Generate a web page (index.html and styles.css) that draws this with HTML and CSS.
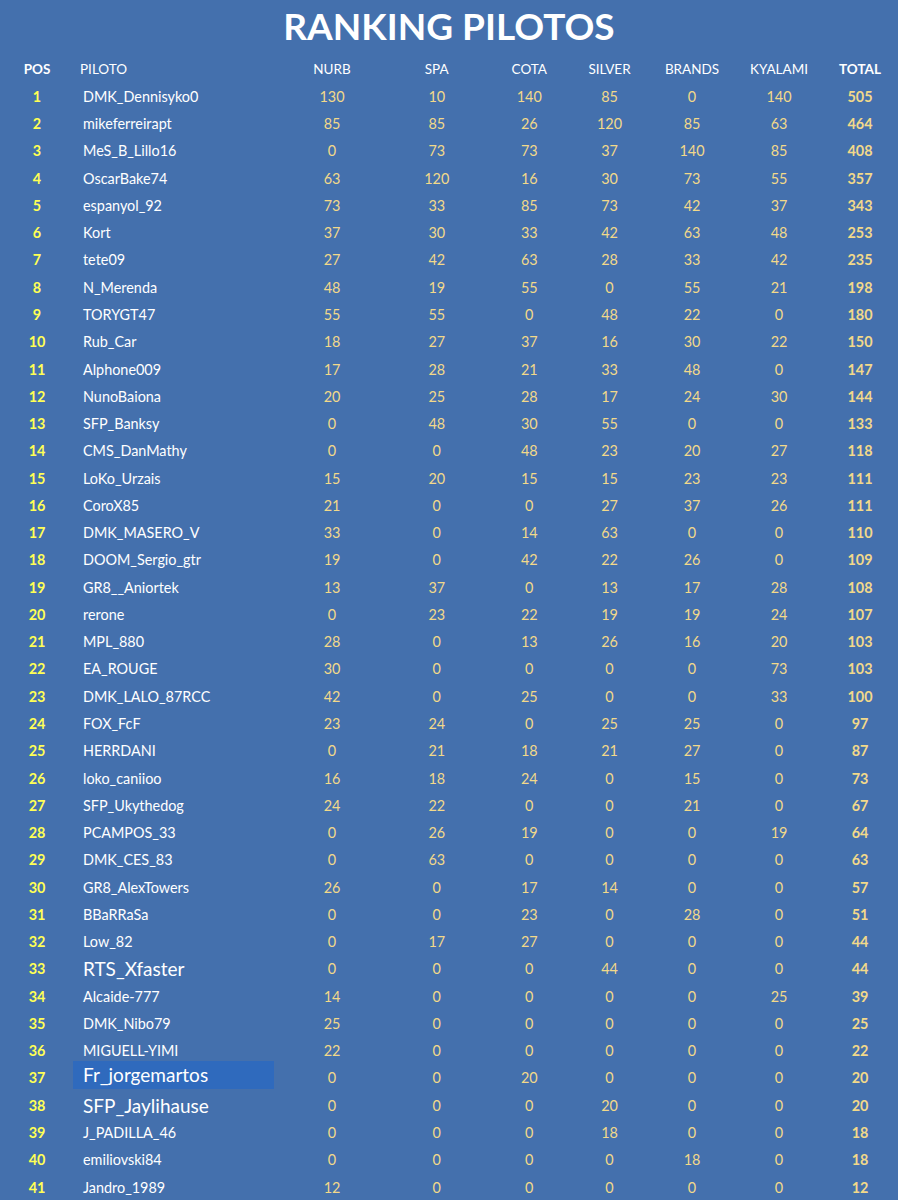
FILE: index.html
```html
<!DOCTYPE html>
<html lang="es">
<head>
<meta charset="utf-8">
<title>Ranking Pilotos</title>
<link rel="stylesheet" href="styles.css">
</head>
<body>
<div class="page">
  <h1 class="title">RANKING PILOTOS</h1>
  <div class="row head">
    <div class="pos">POS</div><div class="name">PILOTO</div><div class="v">NURB</div><div class="v">SPA</div><div class="v">COTA</div><div class="v">SILVER</div><div class="v">BRANDS</div><div class="v">KYALAMI</div><div class="tot">TOTAL</div>
  </div>
  <div class="row"><div class="pos">1</div><div class="name">DMK_Dennisyko0</div><div class="v">130</div><div class="v">10</div><div class="v">140</div><div class="v">85</div><div class="v">0</div><div class="v">140</div><div class="tot">505</div></div>
  <div class="row"><div class="pos">2</div><div class="name">mikeferreirapt</div><div class="v">85</div><div class="v">85</div><div class="v">26</div><div class="v">120</div><div class="v">85</div><div class="v">63</div><div class="tot">464</div></div>
  <div class="row"><div class="pos">3</div><div class="name">MeS_B_Lillo16</div><div class="v">0</div><div class="v">73</div><div class="v">73</div><div class="v">37</div><div class="v">140</div><div class="v">85</div><div class="tot">408</div></div>
  <div class="row"><div class="pos">4</div><div class="name">OscarBake74</div><div class="v">63</div><div class="v">120</div><div class="v">16</div><div class="v">30</div><div class="v">73</div><div class="v">55</div><div class="tot">357</div></div>
  <div class="row"><div class="pos">5</div><div class="name">espanyol_92</div><div class="v">73</div><div class="v">33</div><div class="v">85</div><div class="v">73</div><div class="v">42</div><div class="v">37</div><div class="tot">343</div></div>
  <div class="row"><div class="pos">6</div><div class="name">Kort</div><div class="v">37</div><div class="v">30</div><div class="v">33</div><div class="v">42</div><div class="v">63</div><div class="v">48</div><div class="tot">253</div></div>
  <div class="row"><div class="pos">7</div><div class="name">tete09</div><div class="v">27</div><div class="v">42</div><div class="v">63</div><div class="v">28</div><div class="v">33</div><div class="v">42</div><div class="tot">235</div></div>
  <div class="row"><div class="pos">8</div><div class="name">N_Merenda</div><div class="v">48</div><div class="v">19</div><div class="v">55</div><div class="v">0</div><div class="v">55</div><div class="v">21</div><div class="tot">198</div></div>
  <div class="row"><div class="pos">9</div><div class="name">TORYGT47</div><div class="v">55</div><div class="v">55</div><div class="v">0</div><div class="v">48</div><div class="v">22</div><div class="v">0</div><div class="tot">180</div></div>
  <div class="row"><div class="pos">10</div><div class="name">Rub_Car</div><div class="v">18</div><div class="v">27</div><div class="v">37</div><div class="v">16</div><div class="v">30</div><div class="v">22</div><div class="tot">150</div></div>
  <div class="row"><div class="pos">11</div><div class="name">Alphone009</div><div class="v">17</div><div class="v">28</div><div class="v">21</div><div class="v">33</div><div class="v">48</div><div class="v">0</div><div class="tot">147</div></div>
  <div class="row"><div class="pos">12</div><div class="name">NunoBaiona</div><div class="v">20</div><div class="v">25</div><div class="v">28</div><div class="v">17</div><div class="v">24</div><div class="v">30</div><div class="tot">144</div></div>
  <div class="row"><div class="pos">13</div><div class="name">SFP_Banksy</div><div class="v">0</div><div class="v">48</div><div class="v">30</div><div class="v">55</div><div class="v">0</div><div class="v">0</div><div class="tot">133</div></div>
  <div class="row"><div class="pos">14</div><div class="name">CMS_DanMathy</div><div class="v">0</div><div class="v">0</div><div class="v">48</div><div class="v">23</div><div class="v">20</div><div class="v">27</div><div class="tot">118</div></div>
  <div class="row"><div class="pos">15</div><div class="name">LoKo_Urzais</div><div class="v">15</div><div class="v">20</div><div class="v">15</div><div class="v">15</div><div class="v">23</div><div class="v">23</div><div class="tot">111</div></div>
  <div class="row"><div class="pos">16</div><div class="name">CoroX85</div><div class="v">21</div><div class="v">0</div><div class="v">0</div><div class="v">27</div><div class="v">37</div><div class="v">26</div><div class="tot">111</div></div>
  <div class="row"><div class="pos">17</div><div class="name">DMK_MASERO_V</div><div class="v">33</div><div class="v">0</div><div class="v">14</div><div class="v">63</div><div class="v">0</div><div class="v">0</div><div class="tot">110</div></div>
  <div class="row"><div class="pos">18</div><div class="name">DOOM_Sergio_gtr</div><div class="v">19</div><div class="v">0</div><div class="v">42</div><div class="v">22</div><div class="v">26</div><div class="v">0</div><div class="tot">109</div></div>
  <div class="row"><div class="pos">19</div><div class="name">GR8__Aniortek</div><div class="v">13</div><div class="v">37</div><div class="v">0</div><div class="v">13</div><div class="v">17</div><div class="v">28</div><div class="tot">108</div></div>
  <div class="row"><div class="pos">20</div><div class="name">rerone</div><div class="v">0</div><div class="v">23</div><div class="v">22</div><div class="v">19</div><div class="v">19</div><div class="v">24</div><div class="tot">107</div></div>
  <div class="row"><div class="pos">21</div><div class="name">MPL_880</div><div class="v">28</div><div class="v">0</div><div class="v">13</div><div class="v">26</div><div class="v">16</div><div class="v">20</div><div class="tot">103</div></div>
  <div class="row"><div class="pos">22</div><div class="name">EA_ROUGE</div><div class="v">30</div><div class="v">0</div><div class="v">0</div><div class="v">0</div><div class="v">0</div><div class="v">73</div><div class="tot">103</div></div>
  <div class="row"><div class="pos">23</div><div class="name">DMK_LALO_87RCC</div><div class="v">42</div><div class="v">0</div><div class="v">25</div><div class="v">0</div><div class="v">0</div><div class="v">33</div><div class="tot">100</div></div>
  <div class="row"><div class="pos">24</div><div class="name">FOX_FcF</div><div class="v">23</div><div class="v">24</div><div class="v">0</div><div class="v">25</div><div class="v">25</div><div class="v">0</div><div class="tot">97</div></div>
  <div class="row"><div class="pos">25</div><div class="name">HERRDANI</div><div class="v">0</div><div class="v">21</div><div class="v">18</div><div class="v">21</div><div class="v">27</div><div class="v">0</div><div class="tot">87</div></div>
  <div class="row"><div class="pos">26</div><div class="name">loko_caniioo</div><div class="v">16</div><div class="v">18</div><div class="v">24</div><div class="v">0</div><div class="v">15</div><div class="v">0</div><div class="tot">73</div></div>
  <div class="row"><div class="pos">27</div><div class="name">SFP_Ukythedog</div><div class="v">24</div><div class="v">22</div><div class="v">0</div><div class="v">0</div><div class="v">21</div><div class="v">0</div><div class="tot">67</div></div>
  <div class="row"><div class="pos">28</div><div class="name">PCAMPOS_33</div><div class="v">0</div><div class="v">26</div><div class="v">19</div><div class="v">0</div><div class="v">0</div><div class="v">19</div><div class="tot">64</div></div>
  <div class="row"><div class="pos">29</div><div class="name">DMK_CES_83</div><div class="v">0</div><div class="v">63</div><div class="v">0</div><div class="v">0</div><div class="v">0</div><div class="v">0</div><div class="tot">63</div></div>
  <div class="row"><div class="pos">30</div><div class="name">GR8_AlexTowers</div><div class="v">26</div><div class="v">0</div><div class="v">17</div><div class="v">14</div><div class="v">0</div><div class="v">0</div><div class="tot">57</div></div>
  <div class="row"><div class="pos">31</div><div class="name">BBaRRaSa</div><div class="v">0</div><div class="v">0</div><div class="v">23</div><div class="v">0</div><div class="v">28</div><div class="v">0</div><div class="tot">51</div></div>
  <div class="row"><div class="pos">32</div><div class="name">Low_82</div><div class="v">0</div><div class="v">17</div><div class="v">27</div><div class="v">0</div><div class="v">0</div><div class="v">0</div><div class="tot">44</div></div>
  <div class="row"><div class="pos">33</div><div class="name big">RTS_Xfaster</div><div class="v">0</div><div class="v">0</div><div class="v">0</div><div class="v">44</div><div class="v">0</div><div class="v">0</div><div class="tot">44</div></div>
  <div class="row"><div class="pos">34</div><div class="name">Alcaide-777</div><div class="v">14</div><div class="v">0</div><div class="v">0</div><div class="v">0</div><div class="v">0</div><div class="v">25</div><div class="tot">39</div></div>
  <div class="row"><div class="pos">35</div><div class="name">DMK_Nibo79</div><div class="v">25</div><div class="v">0</div><div class="v">0</div><div class="v">0</div><div class="v">0</div><div class="v">0</div><div class="tot">25</div></div>
  <div class="row"><div class="pos">36</div><div class="name">MIGUELL-YIMI</div><div class="v">22</div><div class="v">0</div><div class="v">0</div><div class="v">0</div><div class="v">0</div><div class="v">0</div><div class="tot">22</div></div>
  <div class="row"><div class="pos">37</div><div class="name big hl">Fr_jorgemartos</div><div class="v">0</div><div class="v">0</div><div class="v">20</div><div class="v">0</div><div class="v">0</div><div class="v">0</div><div class="tot">20</div></div>
  <div class="row"><div class="pos">38</div><div class="name big">SFP_Jaylihause</div><div class="v">0</div><div class="v">0</div><div class="v">0</div><div class="v">20</div><div class="v">0</div><div class="v">0</div><div class="tot">20</div></div>
  <div class="row"><div class="pos">39</div><div class="name">J_PADILLA_46</div><div class="v">0</div><div class="v">0</div><div class="v">0</div><div class="v">18</div><div class="v">0</div><div class="v">0</div><div class="tot">18</div></div>
  <div class="row"><div class="pos">40</div><div class="name">emiliovski84</div><div class="v">0</div><div class="v">0</div><div class="v">0</div><div class="v">0</div><div class="v">18</div><div class="v">0</div><div class="tot">18</div></div>
  <div class="row"><div class="pos">41</div><div class="name">Jandro_1989</div><div class="v">12</div><div class="v">0</div><div class="v">0</div><div class="v">0</div><div class="v">0</div><div class="v">0</div><div class="tot">12</div></div>
</div>
</body>
</html>
```

FILE: styles.css
```css
html, body {
  margin: 0;
  padding: 0;
  background: #4470ad;
}
body {
  font-family: "Lato", "Open Sans", "Liberation Sans", sans-serif;
  color: #ffffff;
  width: 898px;
  height: 1200px;
  overflow: hidden;
}
.page {
  width: 898px;
}
.title {
  margin: 0;
  height: 55.5px;
  line-height: 52px;
  text-align: center;
  font-size: 37px;
  font-weight: 700;
  color: #ffffff;
}
.row {
  display: grid;
  grid-template-columns: 74px 204px 108px 101.5px 83.5px 77px 88px 86px 76px;
  height: 27.275px;
  align-items: center;
  font-size: 14.4px;
}
.row > div {
  white-space: nowrap;
}
.pos {
  text-align: center;
  font-weight: 700;
  color: #ffff55;
}
.name {
  padding-left: 9px;
  color: #ffffff;
}
.v {
  text-align: center;
  color: #f2d98a;
}
.tot {
  text-align: center;
  font-weight: 700;
  color: #f2d98a;
}
.head {
  font-size: 13.5px;
  font-weight: 700;
}
.head > div {
  color: #ffffff;
}
.head .name {
  padding-left: 6px;
  font-weight: 400;
}
.head .v {
  font-weight: 400;
}
.big {
  font-size: 19px;
}
.hl {
  background: #2f6abd;
  align-self: stretch;
  display: flex;
  align-items: center;
  margin: -3px 4px 3px -1px;
  padding-left: 10px;
}
```
